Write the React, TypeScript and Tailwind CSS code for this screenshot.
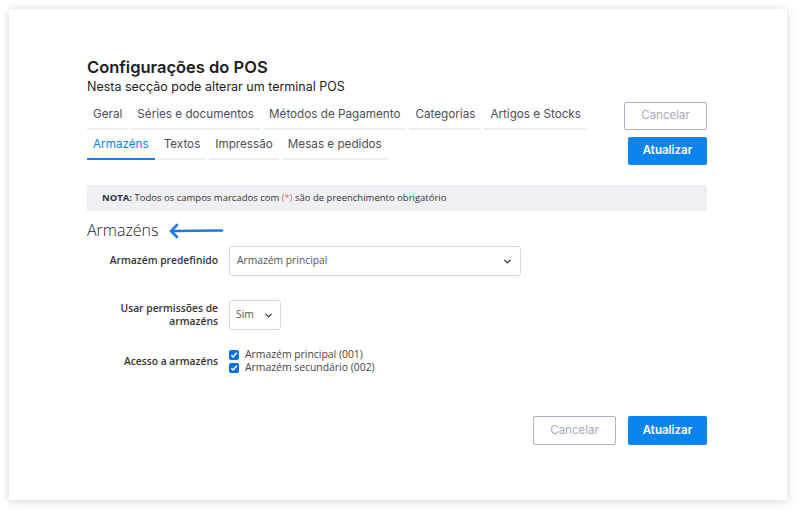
import { ChevronDown } from "lucide-react";

const row1 = ["Geral", "Séries e documentos", "Métodos de Pagamento", "Categorias", "Artigos e Stocks"];
const row2 = ["Armazéns", "Textos", "Impressão", "Mesas e pedidos"];

function Tab({ label, active }: { label: string; active?: boolean }) {
  return (
    <div
      className={`px-[6px] pb-[4px] border-b-2 text-[11.7px] leading-[19px] ${
        active ? "border-[#0a84ee] text-[#0a84ee]" : "border-[#eceef1] text-[#4a4f57]"
      }`}
    >
      {label}
    </div>
  );
}

function Check({ label }: { label: string }) {
  return (
    <label className="flex items-center gap-[6px] h-[13px]">
      <span className="w-[10px] h-[10px] rounded-[2px] bg-[#0a6ee8] flex items-center justify-center">
        <svg width="8" height="8" viewBox="0 0 8 8">
          <path d="M1.2 4.2 L3.1 6 L6.8 1.8" fill="none" stroke="white" strokeWidth="1.5" />
        </svg>
      </span>
      <span className="text-[10.4px] text-[#444]">{label}</span>
    </label>
  );
}

export default function App() {
  const heading = { fontFamily: "Inter, 'Noto Sans', sans-serif" };
  const body = { fontFamily: "'Open Sans', 'Noto Sans', sans-serif" };
  return (
    <div className="w-[800px] h-[516px] bg-white p-[9px] pr-[13px] pb-[16px]">
      <div className="w-[778px] h-[491px] bg-white shadow-[0_1px_8px_rgba(120,130,160,0.35)] pl-[78px] pr-[80px] pt-[46px]">
        <div style={heading}>
          <h1 className="text-[16.5px] leading-[24px] font-semibold text-[#1b1d21]">
            Configurações do POS
          </h1>
          <p className="text-[12.5px] leading-[17px] text-[#1b1d21] mt-[-1px]">Nesta secção pode alterar um terminal POS</p>
          <div className="flex justify-between mt-[10px]">
            <div className="flex flex-col gap-[5px]">
              <div className="flex gap-[3px]">
                {row1.map((t) => (
                  <Tab key={t} label={t} />
                ))}
              </div>
              <div className="flex gap-[3px]">
                {row2.map((t, i) => (
                  <Tab key={t} label={t} active={i === 0} />
                ))}
              </div>
            </div>
            <div className="flex flex-col items-end gap-[7px] -mt-[3px]">
              <button className="w-[83px] h-[28px] border border-[#a9b4c8] rounded-[2px] text-[11.5px] text-[#a3abba]">
                Cancelar
              </button>
              <button className="w-[79px] h-[28px] bg-[#0a84ee] rounded-[2px] text-[11.5px] font-semibold text-white">
                Atualizar
              </button>
            </div>
          </div>
        </div>

        <div style={body}>
          <div className="mt-[20px] h-[26px] bg-[#eef0f3] flex items-center pl-[15px] text-[9.5px] text-[#333]">
            <b className="font-bold">NOTA:</b>&nbsp;Todos os campos marcados com&nbsp;<span className="text-[#e26a6a]">(*)</span>&nbsp;são de preenchimento obrigatório
          </div>

          <div className="flex items-center mt-[8px] h-[22px]">
            <h2 className="text-[16px] text-[#222] font-light">Armazéns</h2>
            <svg width="56" height="16" viewBox="0 0 56 16" className="ml-[9px] mt-[2px]">
              <path d="M54 7.5 L5 8" stroke="#1a7ae6" strokeWidth="2.6" strokeLinecap="round" />
              <path d="M9 2 L3 8 L9 14" fill="none" stroke="#1a7ae6" strokeWidth="2.6" strokeLinecap="round" strokeLinejoin="round" />
            </svg>
          </div>

          <div className="flex items-center mt-[5px]">
            <div className="w-[142px] text-right text-[10.3px] font-semibold text-[#333] pr-[11px]">Armazém predefinido</div>
            <div className="w-[292px] h-[30px] border border-[#d6d9de] rounded-[3px] flex items-center justify-between px-[7px]">
              <span className="text-[10.3px] text-[#555]">Armazém principal</span>
              <ChevronDown size={11} strokeWidth={3} className="text-[#333]" />
            </div>
          </div>

          <div className="flex items-center mt-[24px]">
            <div className="w-[142px] text-right text-[10.3px] leading-[13px] font-semibold text-[#333] pr-[11px]">
              Usar permissões de
              <br />
              armazéns
            </div>
            <div className="w-[52px] h-[30px] border border-[#d6d9de] rounded-[3px] flex items-center justify-between px-[6px]">
              <span className="text-[10.3px] text-[#555]">Sim</span>
              <ChevronDown size={11} strokeWidth={3} className="text-[#333]" />
            </div>
          </div>

          <div className="flex items-center mt-[18px]">
            <div className="w-[142px] text-right text-[10.3px] font-semibold text-[#333] pr-[11px] pt-[2px]">Acesso a armazéns</div>
            <div className="flex flex-col">
              <Check label="Armazém principal (001)" />
              <Check label="Armazém secundário (002)" />
            </div>
          </div>
        </div>

        <div className="flex justify-end gap-[12px] mt-[42px]" style={heading}>
          <button className="w-[83px] h-[29px] border border-[#a9b4c8] rounded-[2px] text-[11.5px] text-[#a3abba]">
            Cancelar
          </button>
          <button className="w-[79px] h-[29px] bg-[#0a84ee] rounded-[2px] text-[11.5px] font-semibold text-white">
            Atualizar
          </button>
        </div>
      </div>
    </div>
  );
}
